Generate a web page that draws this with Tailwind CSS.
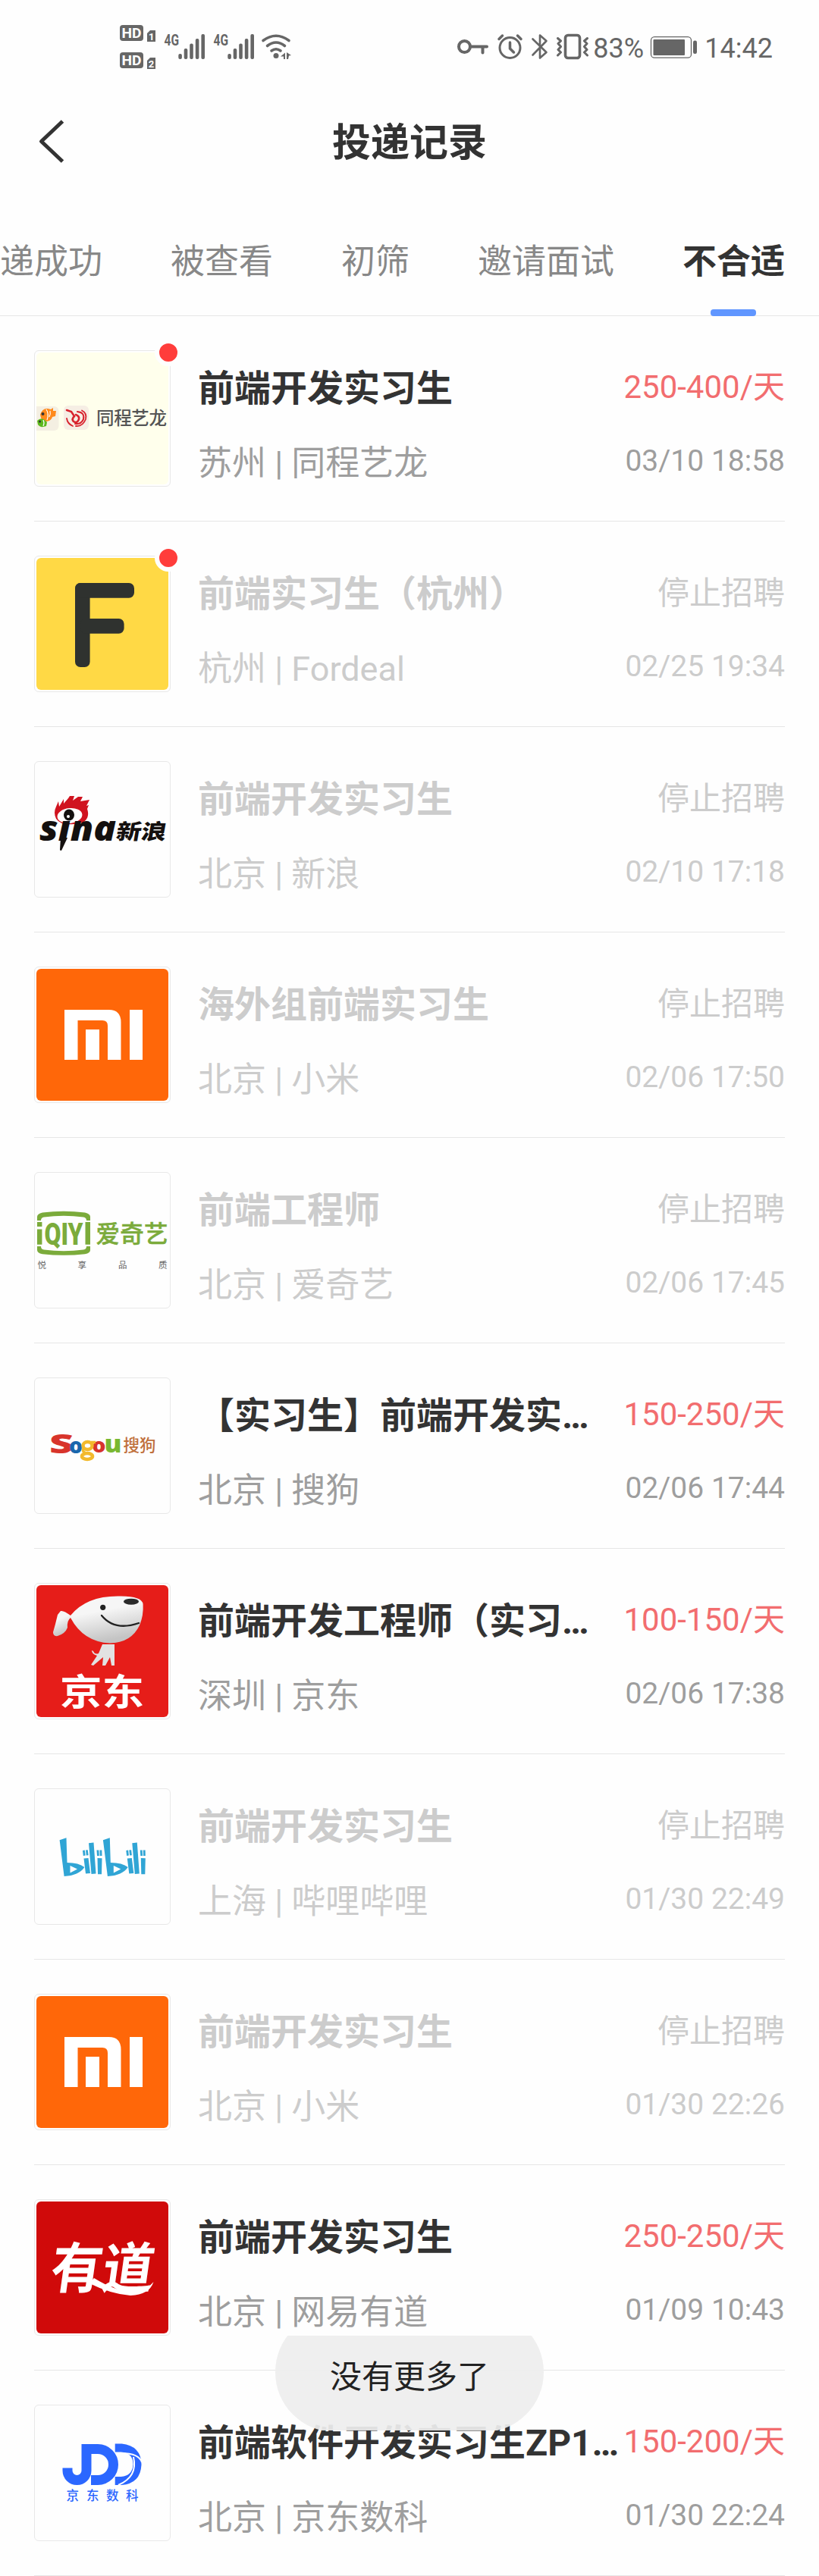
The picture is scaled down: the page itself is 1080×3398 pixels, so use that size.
<!DOCTYPE html>
<html lang="zh-CN">
<head>
<meta charset="utf-8">
<title>投递记录</title>
<script src="https://cdn.jsdelivr.net/npm/@tailwindcss/browser@4"></script>
</head>
<body class="bg-[#fefefe]">
<div class="relative w-[1080px] h-[3398px] overflow-hidden font-[Roboto,'Noto_Sans_CJK_SC',sans-serif] text-[#333]">

  <!-- status bar -->
  <div class="flex h-[124px] items-center pl-[157px] pr-[61px] text-[#666]">
    <svg class="h-[58px] w-[228px]" viewBox="157 33 228 58" fill="currentColor">
      <g id="hd"><rect x="158" y="33" width="31" height="21" rx="4"/><text x="160.5" y="50" font-size="19" font-weight="700" fill="#fefefe" textLength="26" lengthAdjust="spacingAndGlyphs">HD</text></g>
      <use href="#hd" y="36"/>
      <path d="M194 44l4-4h7v15h-11zM194 80l4-4h7v15h-11z"/>
      <text x="196" y="52.500" font-size="13" font-weight="700" fill="#fefefe">1</text>
      <text x="195.800" y="88.500" font-size="13" font-weight="700" fill="#fefefe">2</text>
      <g id="sig">
        <text x="216.500" y="60" font-size="20" font-weight="700" textLength="19.500" lengthAdjust="spacingAndGlyphs">4G</text>
        <rect x="235.300" y="71" width="4.600" height="7" rx="2"/><rect x="242.700" y="64" width="4.600" height="14" rx="2"/><rect x="250.200" y="57.500" width="4.600" height="20.500" rx="2"/><rect x="257.800" y="51" width="4.600" height="27" rx="2"/><rect x="265.400" y="45" width="4.600" height="33" rx="2"/>
      </g>
      <use href="#sig" x="65"/>
      <g fill="none" stroke="currentColor" stroke-width="3.600" stroke-linecap="round"><path d="M347 53.500Q364 41 381 53.500M352.500 60.500Q364 51.500 375.500 60.500M358 67Q364 62.500 370 67"/></g>
      <circle cx="364" cy="73.500" r="3.500"/><path d="M370 74.500l6-5V78h-2v-3.500zM378 69l6 4-3 .500-1 4.500h-2z"/>
    </svg>
    <div class="ml-auto flex items-center">
      <svg class="h-[36px] w-[176px]" viewBox="604 44 176 36" fill="none" stroke="currentColor">
        <circle cx="614.500" cy="61.500" r="7.500" stroke-width="4"/><path d="M622 61.500H644M638.500 62v7.500" stroke-width="4" stroke-linecap="round"/>
        <circle cx="674.500" cy="63" r="13.500" stroke-width="3"/><path d="M674.500 56v8l5 5" stroke-width="3.500" stroke-linecap="round"/><path d="M660 51.500l4.500-4.500M689 51.500l-4.500-4.500" stroke-width="3.500" stroke-linecap="round"/>
        <path d="M704.500 51.500L722.500 69 714 76.500V46.500L722.500 54 704.500 72.500" stroke-width="2.600" stroke-linecap="round" stroke-linejoin="round"/>
        <rect x="747.500" y="46.500" width="19" height="30" rx="3.500" stroke-width="3.600"/>
        <path d="M737.500 50.500l4 3.500-3.500 3.500 3.500 4-3.500 4 3.500 3.500-4 4M776.500 50.500l-4 3.500 3.500 3.500-3.500 4 3.500 4-3.500 3.500 4 4" stroke-width="3" stroke-linecap="round" stroke-linejoin="round"/>
      </svg>
      <span class="ml-1 w-[75px] pt-[3px] text-[36px] leading-[42px] whitespace-nowrap">83%</span>
      <svg class="h-[30px] w-[63px]" viewBox="859 47 63 30" fill="currentColor">
        <rect x="860.500" y="48.700" width="53" height="27.500" rx="4.500" fill="none" stroke="currentColor" stroke-width="1.300"/><rect x="863.500" y="52" width="41.500" height="21" rx="1"/><rect x="916" y="53.500" width="5" height="17.500" rx="2.300"/>
      </svg>
      <span class="ml-[9px] pt-[3px] text-[36px] leading-[42px]">14:42</span>
    </div>
  </div>

  <!-- title bar -->
  <div class="grid h-[127px] grid-cols-[1fr_auto_1fr] items-center">
    <svg class="ml-[48px] h-[60px] w-[40px]" viewBox="0 0 40 60" fill="none" stroke="#333" stroke-width="5" stroke-linejoin="round"><path d="M34.500 2L6.500 28.500 34.500 55"/></svg>
    <h1 class="pt-[3px] text-[51px] leading-[60px] font-bold">投递记录</h1>
  </div>

  <!-- tabs -->
  <div class="flex h-[166px] items-center justify-end gap-[90px] border-b border-[#e6e6e6] pt-[25px] pr-[45px] text-[45px] leading-[60px] whitespace-nowrap text-[#888]">
    <span>递成功</span><span>被查看</span><span>初筛</span><span>邀请面试</span>
    <span class="relative font-bold text-[#333]">不合适<i class="absolute top-[92px] left-[37px] h-[9px] w-[60px] rounded-[4px] bg-[#6096ff]"></i></span>
  </div>

  <ul id="list"></ul>

  <!-- toast -->
  <div class="absolute top-[3081px] left-[363px] h-[125px] w-[354px] overflow-hidden">
    <div class="-mt-[31px] flex h-[158px] items-center justify-center rounded-[79px] bg-[#eee]/93 pt-[14px] text-[42px] leading-[50px] text-[#222]">没有更多了</div>
  </div>
</div>

<script>
const mi = `<rect width="174" height="174" fill="#ff6709"/><path fill="#fff" d="M37 54H95.500Q111.500 54 111.500 70.500V120H94V75Q94 68 87 68H54.500V120H37zM65 80H83V120H65zM123 54H140V120H123z"/>`;
const bili = `<path d="M30.600 65.300L39.500 62.300 40.500 95Q56 95 63.400 101 56 112 36.600 113zM44.500 99V108.500L54 103.500z" fill-rule="evenodd"/><path d="M62.500 89.500l6-.5 2.500 20-6 .5zM69 69.200l6.500-.7 3 41-6 .5zM80.500 89l6 .2-.5 21h-5zM61 79l2.800-.5.8 7-2.800.5zM65 78.500l2.800-.2.800 7-2.800.3zM79.500 78.500h2.800l.5 7.500h-2.800zM83.500 78.500h2.800l.2 7.500h-2.800z"/>`;
const logos = {
  ly: `<rect width="174" height="174" fill="#ffffec"/><rect x="-6" y="71" width="35.500" height="32" rx="6" fill="#f4efe2"/><rect x="36" y="70" width="33" height="32" rx="6" fill="#f6eee4"/>
    <path d="M5 82Q8 73 15 74L19 75 22 73 22 77 26 77 25 84 21 85Q20 90 13 91 6 90 5 82z" fill="#ff8a1c"/><path d="M13 75q4 6 1 14M18 77q1 4-1 8" stroke="#fff" stroke-width="1.200" fill="none"/><circle cx="8.500" cy="81" r="2" fill="#333"/>
    <path d="M1 90Q6 85 11 89L14 92 13 97Q5 100 2 95z" fill="#5cb81d"/><path d="M9 89q2 4 0 8" stroke="#fff" stroke-width="1.200" fill="none"/><circle cx="4.500" cy="91" r="1.500" fill="#333"/>
    <g fill="none" stroke="#d8232d" stroke-linecap="round"><path d="M40 76L46 78 50 84Q46 88 49 91 54 94 56 88 57 84 52 82" stroke-width="2.600"/><path d="M54 78Q64 79 62 88 59 95 51 94" stroke-width="2"/><path d="M60 76.500Q67 80 65 88 61 98 52 97M40 87Q41 94 48 97" stroke-width="1.800"/></g>
    <text x="79" y="95" font-size="23.500" font-weight="500" fill="#555" textLength="93">同程艺龙</text>`,
  fordeal: `<rect width="174" height="174" fill="#ffd945"/><g fill="#2f322f"><rect x="51" y="33" width="19.600" height="111" rx="7"/><rect x="51" y="33" width="78" height="19.700" rx="7"/><rect x="58" y="80" width="57.600" height="19.700" rx="7"/></g>`,
  sina: `<path d="M26 73Q22 65 26 57L29 50 30 57 36 47 36 53 42 46 44 43 50 43 48 49 55 44 61 44 58 50 70 48 66 56 69 55 67 60Q71 72 61 78L50 80Q32 82 26 73z" fill="#d0131f"/><ellipse cx="44" cy="69" rx="16.500" ry="10" fill="#fff" transform="rotate(-6 44 69)"/><ellipse cx="43" cy="68" rx="7" ry="7.500" fill="#14100f"/><circle cx="42" cy="70" r="2" fill="#fff"/>
    <g fill="#14100f"><text x="4" y="102" font-family="Open Sans" font-size="46" font-weight="800" font-style="italic" textLength="101" lengthAdjust="spacingAndGlyphs">sına</text><path d="M32 98L41 98 33 115 31 114.500z"/><g transform="translate(104 100) skewX(-10)"><text x="0" y="0" font-size="28" font-weight="900" textLength="66" lengthAdjust="spacingAndGlyphs">新浪</text></g></g>`,
  mi,
  iqiyi: `<g fill="#7bab3b"><path d="M1 61V56Q1 52 8 50.500 36 47 64 50.500 71 52 71 56V61H66Q66 57 62 56.500 36 53 10 56.500 6 57 6 61zM1 95H6Q6 99 10 99.500 36 103 62 99.500 66 99 66 95H71V100Q71 104 64 105.200 36 108.500 8 105.200 1 104 1 100z"/><rect x="1" y="63" width="6.400" height="6"/><rect x="1" y="72.500" width="6.400" height="20.200"/><rect x="64.500" y="63" width="6.500" height="29.700"/>
    <text x="10.500" y="92.500" font-size="41" font-weight="900" textLength="51" lengthAdjust="spacingAndGlyphs">QIY</text><text x="78.500" y="90" font-size="31.500" font-weight="500" stroke="#7bab3b" stroke-width=".5" textLength="95">爱奇艺</text></g>
    <g fill="#666" font-size="11.500"><text x="1.500" y="123.500">悦</text><text x="54.500" y="123.500">享</text><text x="108" y="123.500">品</text><text x="161" y="123.500">质</text></g>`,
  sogou: `<g font-family="Open Sans" font-weight="800"><text x="17" y="96.500" font-size="36" fill="#d8342b" textLength="32" lengthAdjust="spacingAndGlyphs">S</text><text x="43" y="96.500" font-size="28" fill="#1a67ad" textLength="18" lengthAdjust="spacingAndGlyphs">o</text><text x="73.500" y="95.500" font-size="27" fill="#d8342b" textLength="18" lengthAdjust="spacingAndGlyphs">o</text><text x="89.500" y="95.500" font-size="31" fill="#79b832" textLength="23" lengthAdjust="spacingAndGlyphs">u</text></g><g fill="none" stroke="#f2b92c" stroke-width="4.500"><ellipse cx="67.500" cy="87" rx="6" ry="5"/><ellipse cx="67" cy="101" rx="7" ry="4"/><path d="M72 82.500h6M62 91q-2 3 2 5" stroke-width="3.500"/></g>
    <text x="114.500" y="93.500" font-size="21.500" font-weight="500" fill="#c0703c">搜狗</text>`,
  jd: `<defs><linearGradient id="dog" x1="0" y1="0" x2=".3" y2="1"><stop offset=".4" stop-color="#f6f6f6"/><stop offset="1" stop-color="#c4c4c4"/></linearGradient></defs><rect width="174" height="174" fill="#e61d19"/>
    <path d="M87 78H103V106H99L97 95 91 106H87L88 95 75 106 72 105 80 93Q73 91 73 86L75 87Q77 92 82 90z" fill="#e2e2e2"/>
    <path d="M45 40Q36 33 32 34L28 39Q25 52 22 62 22 68 28 67 38 64 41 56 40 47 45 43z" fill="url(#dog)"/>
    <path d="M45 40Q66 14 109 14.500 139 14 140.600 25 141.500 40 136 53 125 76 97 76.500 62 75 45 43z" fill="url(#dog)"/>
    <ellipse cx="125" cy="21.700" rx="10" ry="4" fill="#2a2a2a"/><circle cx="87.700" cy="29.300" r="3.600" fill="#222"/><path d="M86 40Q103 61 135 50" fill="none" stroke="#222" stroke-width="2.300" stroke-linecap="round"/>
    <text x="31" y="157.500" font-size="48" font-weight="700" fill="#fff" textLength="111" lengthAdjust="spacingAndGlyphs">京东</text>`,
  bili: `<g fill="#30a5d5">${bili}<g transform="translate(57.300)">${bili}</g></g>`,
  youdao: `<rect width="174" height="174" fill="#d00a0a"/><g fill="#fff" transform="translate(16 114) skewX(-8)"><text x="0" y="0" font-size="72" font-weight="700" textLength="136" lengthAdjust="spacingAndGlyphs">有道</text></g><path d="M76 101Q105 119 128 119 146 117 154.500 106 149 123 124 124 98 122 70 108z" fill="#fff"/>`,
  jdd: `<g fill="none" stroke="#2b67ff" stroke-width="13"><path d="M66 49V84A12.500 12.500 0 0 1 41 84V80.500"/><path d="M66 55.500H81A20.500 20.500 0 0 1 81 96.500H72"/><path d="M103.700 54H112Q133 56 133 76 132 96 112 97.500H103.700" stroke-width="11"/></g><path d="M108 61Q135 60 139 73M128 66Q134 92 108 103" stroke="#fff" stroke-width="2" fill="none"/>
    <g fill="#2b67ff" font-size="16.500" font-weight="500"><text x="39.500" y="122.500">京</text><text x="66" y="122.500">东</text><text x="92" y="122.500">数</text><text x="118" y="122.500">科</text></g>`
};
const rows = [
  ['ly','前端开发实习生','苏州 | 同程艺龙','250-400/天','03/10 18:58',1],
  ['fordeal','前端实习生（杭州）','杭州 | Fordeal','','02/25 19:34',1],
  ['sina','前端开发实习生','北京 | 新浪','','02/10 17:18'],
  ['mi','海外组前端实习生','北京 | 小米','','02/06 17:50'],
  ['iqiyi','前端工程师','北京 | 爱奇艺','','02/06 17:45'],
  ['sogou','【实习生】前端开发实…','北京 | 搜狗','150-250/天','02/06 17:44'],
  ['jd','前端开发工程师（实习…','深圳 | 京东','100-150/天','02/06 17:38'],
  ['bili','前端开发实习生','上海 | 哔哩哔哩','','01/30 22:49'],
  ['mi','前端开发实习生','北京 | 小米','','01/30 22:26'],
  ['youdao','前端开发实习生','北京 | 网易有道','250-250/天','01/09 10:43'],
  ['jdd','前端软件开发实习生ZP1…','北京 | 京东数科','150-200/天','01/30 22:24']
];
document.getElementById('list').innerHTML = rows.map(([logo,title,sub,pay,date,dot]) => `
  <li class="mx-[45px] flex h-[271px] border-b border-[#e6e6e6] pt-[45px]">
    <div class="relative h-[180px] w-[180px] shrink-0 rounded-[6px] border border-[#e8e8e8] p-[2px]">
      <svg class="h-[174px] w-[174px] rounded-[6px]" viewBox="0 0 174 174">${logos[logo]}</svg>
      ${dot ? '<i class="absolute top-[-16px] left-[158px] h-[36px] w-[36px] rounded-full border-[6px] border-[#fefefe] bg-[#ff3d3b]"></i>' : ''}
    </div>
    <div class="ml-[36px] flex flex-col gap-[39px] pt-[21px] leading-[60px] whitespace-nowrap">
      <span class="text-[48px] font-bold ${pay ? 'text-[#333]' : 'text-[#ccc]'}">${title}</span>
      <span class="text-[45px] ${pay ? 'text-[#9e9e9e]' : 'text-[#ccc]'}">${sub}</span>
    </div>
    <div class="ml-auto flex flex-col items-end gap-[37px] pt-[19px] leading-[60px] whitespace-nowrap">
      <span class="text-[42px] ${pay ? 'text-[#f26d6f]' : 'pt-px -mb-px text-[#ccc]'}">${pay || '停止招聘'}</span>
      <span class="text-[39px] ${pay ? 'text-[#9e9e9e]' : 'text-[#ccc]'}">${date}</span>
    </div>
  </li>`).join('');
</script>
</body>
</html>
